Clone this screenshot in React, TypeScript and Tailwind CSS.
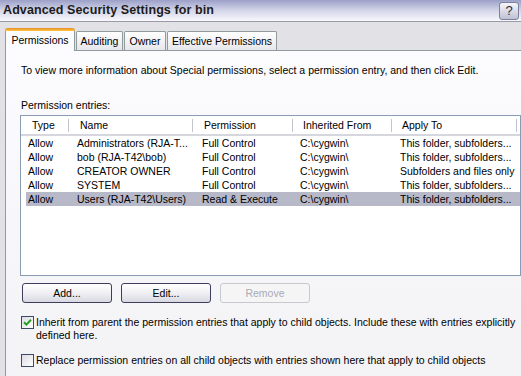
import React from "react";

const rows = [
  ["Allow", "Administrators (RJA-T...", "Full Control", "C:\\cygwin\\", "This folder, subfolders..."],
  ["Allow", "bob (RJA-T42\\bob)", "Full Control", "C:\\cygwin\\", "This folder, subfolders..."],
  ["Allow", "CREATOR OWNER", "Full Control", "C:\\cygwin\\", "Subfolders and files only"],
  ["Allow", "SYSTEM", "Full Control", "C:\\cygwin\\", "This folder, subfolders..."],
  ["Allow", "Users (RJA-T42\\Users)", "Read & Execute", "C:\\cygwin\\", "This folder, subfolders..."],
];

function HeaderCell({ label, pl }: { label: string; pl: string }) {
  return (
    <div className={`flex items-center justify-between ${pl}`}>
      <span className="whitespace-nowrap">{label}</span>
      <div className="w-px h-[13px] bg-[#c4c4cc]" />
    </div>
  );
}

function Checkbox({ checked }: { checked?: boolean }) {
  return (
    <div className="w-[13px] h-[13px] shrink-0 border border-[#3d4a66] bg-gradient-to-br from-[#dcdce4] to-[#ffffff] flex items-center justify-center">
      {checked && (
        <svg width="9" height="9" viewBox="0 0 9 9">
          <path d="M1 4.2 L3.4 6.6 L8 1.8" fill="none" stroke="#22a022" strokeWidth="2" />
        </svg>
      )}
    </div>
  );
}

function Button({ label, disabled }: { label: string; disabled?: boolean }) {
  return (
    <div
      className={
        disabled
          ? "w-[90px] h-[20px] rounded-[3px] border border-[#c8c8d0] bg-[#f5f5f6] text-[#aaaab4] flex items-center justify-center"
          : "w-[90px] h-[20px] rounded-[3px] border border-[#3e3e5a] bg-gradient-to-b from-[#ffffff] via-[#f0f0f4] to-[#d8d8e2] flex items-center justify-center"
      }
    >
      {label}
    </div>
  );
}

export default function App() {
  return (
    <div className="w-[521px] h-[376px] overflow-hidden bg-[#e1e1e6] flex flex-col text-[10.5px] leading-[13px] text-black font-['Liberation_Sans',Arial,sans-serif]">
      {/* Title bar */}
      <div className="h-[22px] shrink-0 flex items-center justify-between pl-[3px] pr-[2px] bg-gradient-to-b from-[#9ca0c8] via-[#d4d6e9] to-[#f8f8fc] border-b border-[#9a9aa8]">
        <span className="font-bold text-[12.5px] text-[#1c1c1c] tracking-[0.1px]">Advanced Security Settings for bin</span>
        <div className="w-[20px] h-[18px] rounded-[3px] border border-[#7d80a0] bg-gradient-to-b from-[#f6f6fb] to-[#bfc1d4] flex items-center justify-center text-[13px] text-[#2a2a3a]">
          ?
        </div>
      </div>

      {/* Body */}
      <div className="flex-1 flex flex-col pl-[5px] pt-[6px] min-h-0">
        {/* Tabs */}
        <div className="flex items-end h-[22px] shrink-0">
          <div className="relative z-10 w-[70px] h-[23px] -mb-px rounded-t-[3px] border-x border-[#919b9c] bg-[#fcfcfe] flex flex-col">
            <div className="h-[3px] rounded-t-[3px] bg-gradient-to-b from-[#e68b2c] to-[#ffc83c] -mx-px" />
            <div className="flex-1 flex items-center justify-center pb-[2px]">Permissions</div>
          </div>
          <div className="ml-px w-[47px] h-[19px] rounded-t-[2px] border-x border-t border-[#919b9c] bg-gradient-to-b from-[#ffffff] to-[#e6e6ec] flex items-center justify-center">
            Auditing
          </div>
          <div className="ml-px w-[42px] h-[19px] rounded-t-[2px] border-x border-t border-[#919b9c] bg-gradient-to-b from-[#ffffff] to-[#e6e6ec] flex items-center justify-center">
            Owner
          </div>
          <div className="ml-px w-[110px] h-[19px] rounded-t-[2px] border-x border-t border-[#919b9c] bg-gradient-to-b from-[#ffffff] to-[#e6e6ec] flex items-center justify-center">
            Effective Permissions
          </div>
        </div>

        {/* Panel */}
        <div className="flex-1 border-t border-l border-[#919b9c] bg-gradient-to-b from-[#fcfcfe] to-[#f3f3f5] pl-[15px] pt-[13px] flex flex-col">
          <div className="whitespace-nowrap">
            To view more information about Special permissions, select a permission entry, and then click Edit.
          </div>
          <div className="mt-[22px] whitespace-nowrap">Permission entries:</div>

          {/* List */}
          <div className="mt-[3px] -ml-px w-[501px] h-[161px] shrink-0 border border-[#8a9cb4] bg-white flex flex-col">
            <div className="h-[20px] shrink-0 border-b-2 border-[#d6d6de] grid grid-cols-[48px_124px_100px_99px_125px] items-center">
              <HeaderCell label="Type" pl="pl-[11px]" />
              <HeaderCell label="Name" pl="pl-[11px]" />
              <HeaderCell label="Permission" pl="pl-[11px]" />
              <HeaderCell label="Inherited From" pl="pl-[10px]" />
              <HeaderCell label="Apply To" pl="pl-[10px]" />
            </div>
            {rows.map((r, i) => (
              <div
                key={i}
                className={`ml-[5px] h-[14px] leading-[14px] grid grid-cols-[43px_124px_100px_99px_125px] whitespace-nowrap ${
                  i === 4 ? "bg-[#b8b9c8]" : ""
                }`}
              >
                <div className="pl-[2px] overflow-hidden">{r[0]}</div>
                <div className="pl-[8px] overflow-hidden">{r[1]}</div>
                <div className="pl-[9px] overflow-hidden">{r[2]}</div>
                <div className="pl-[7px] overflow-hidden">{r[3]}</div>
                <div className="pl-[8px] overflow-hidden">{r[4]}</div>
              </div>
            ))}
          </div>

          {/* Buttons */}
          <div className="mt-[7px] ml-px flex gap-[9px]">
            <Button label="Add..." />
            <Button label="Edit..." />
            <Button label="Remove" disabled />
          </div>

          {/* Checkbox 1 */}
          <div className="mt-[13px] flex items-start gap-[2px]">
            <Checkbox checked />
            <div className="whitespace-nowrap">
              Inherit from parent the permission entries that apply to child objects. Include these with entries explicitly
              <br />
              defined here.
            </div>
          </div>

          {/* Checkbox 2 */}
          <div className="mt-[12px] flex items-start gap-[2px]">
            <Checkbox />
            <div className="whitespace-nowrap">
              Replace permission entries on all child objects with entries shown here that apply to child objects
            </div>
          </div>
        </div>
      </div>
    </div>
  );
}
